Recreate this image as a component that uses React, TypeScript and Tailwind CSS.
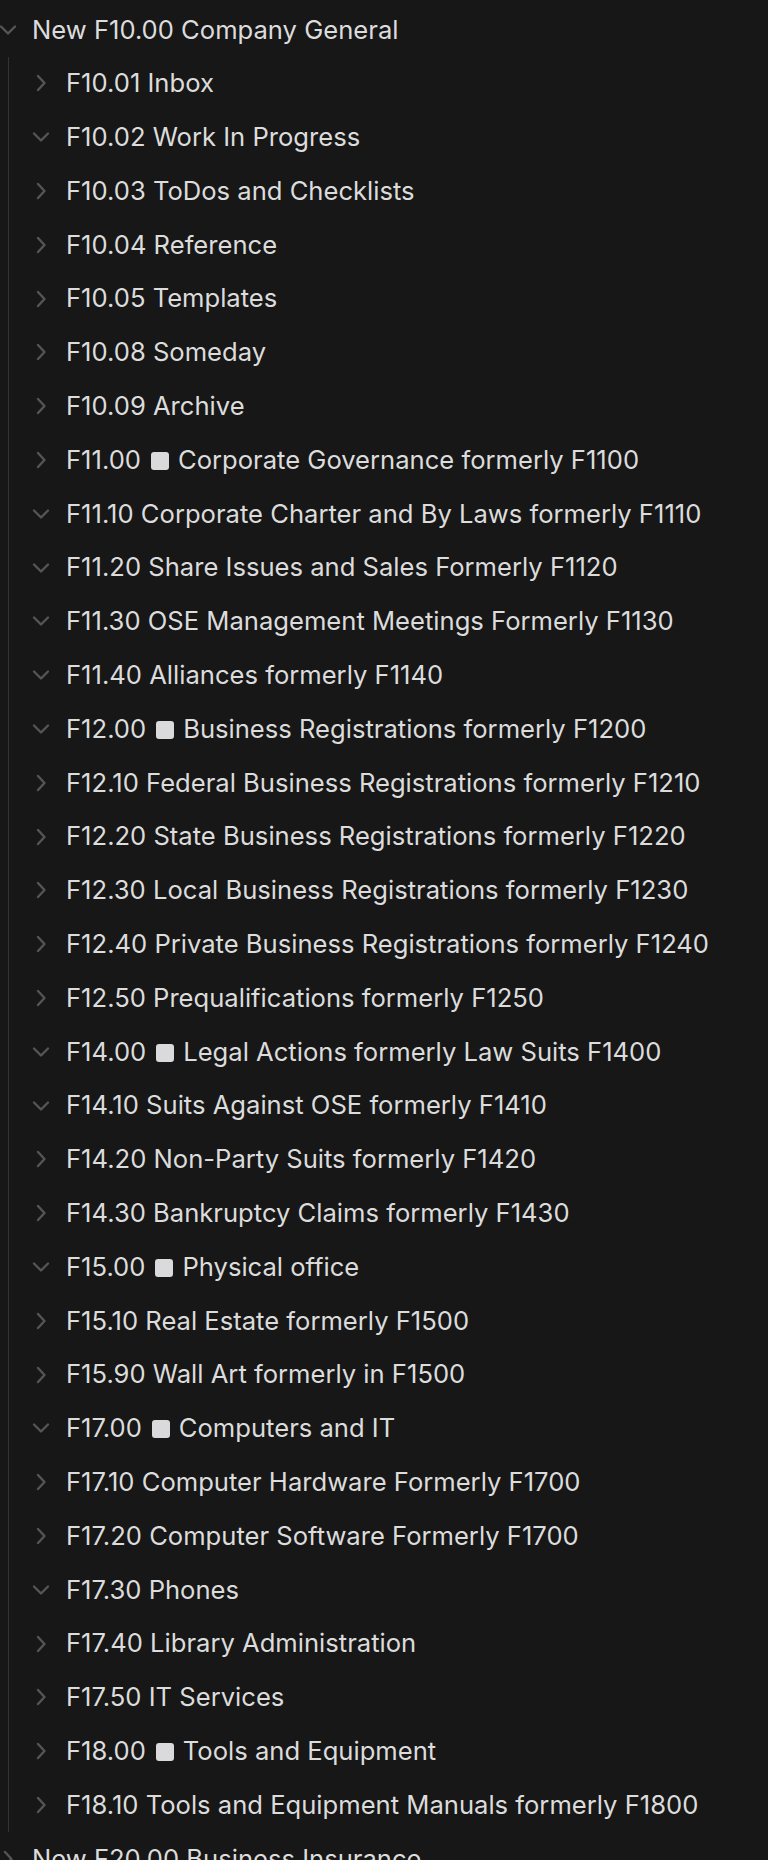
import React from 'react';

type Item = { label: string; open?: boolean; box?: boolean };

const children: Item[] = [
  { label: 'F10.01 Inbox' },
  { label: 'F10.02 Work In Progress', open: true },
  { label: 'F10.03 ToDos and Checklists' },
  { label: 'F10.04 Reference' },
  { label: 'F10.05 Templates' },
  { label: 'F10.08 Someday' },
  { label: 'F10.09 Archive' },
  { label: 'F11.00|Corporate Governance formerly F1100', box: true },
  { label: 'F11.10 Corporate Charter and By Laws formerly F1110', open: true },
  { label: 'F11.20 Share Issues and Sales Formerly F1120', open: true },
  { label: 'F11.30 OSE Management Meetings Formerly F1130', open: true },
  { label: 'F11.40 Alliances formerly F1140', open: true },
  { label: 'F12.00|Business Registrations formerly F1200', box: true, open: true },
  { label: 'F12.10 Federal Business Registrations formerly F1210' },
  { label: 'F12.20 State Business Registrations formerly F1220' },
  { label: 'F12.30 Local Business Registrations formerly F1230' },
  { label: 'F12.40 Private Business Registrations formerly F1240' },
  { label: 'F12.50 Prequalifications formerly F1250' },
  { label: 'F14.00|Legal Actions formerly Law Suits F1400', box: true, open: true },
  { label: 'F14.10 Suits Against OSE formerly F1410', open: true },
  { label: 'F14.20 Non-Party Suits formerly F1420' },
  { label: 'F14.30 Bankruptcy Claims formerly F1430' },
  { label: 'F15.00|Physical office', box: true, open: true },
  { label: 'F15.10 Real Estate formerly F1500' },
  { label: 'F15.90 Wall Art formerly in F1500' },
  { label: 'F17.00|Computers and IT', box: true, open: true },
  { label: 'F17.10 Computer Hardware Formerly F1700' },
  { label: 'F17.20 Computer Software Formerly F1700' },
  { label: 'F17.30 Phones', open: true },
  { label: 'F17.40 Library Administration' },
  { label: 'F17.50 IT Services' },
  { label: 'F18.00|Tools and Equipment', box: true },
  { label: 'F18.10 Tools and Equipment Manuals formerly F1800' },
];

function Chevron({ open }: { open?: boolean }) {
  return (
    <div className="w-[34px] shrink-0 flex items-center justify-center">
      {open ? (
        <svg width="18" height="12" viewBox="0 0 18 12" fill="none">
          <path d="M2 2.5 L9 9.5 L16 2.5" stroke="#555555" strokeWidth="2.4" strokeLinecap="round" strokeLinejoin="round" />
        </svg>
      ) : (
        <svg width="12" height="18" viewBox="0 0 12 18" fill="none">
          <path d="M3 2 L9.5 9 L3 16" stroke="#555555" strokeWidth="2.4" strokeLinecap="round" strokeLinejoin="round" />
        </svg>
      )}
    </div>
  );
}

function Label({ item }: { item: Item }) {
  if (item.box) {
    const [code, rest] = item.label.split('|');
    return (
      <span className="whitespace-nowrap">
        {code}
        <span className="inline-block w-[18px] h-[18px] rounded-[3px] bg-[#dadadd] ml-[10px] mr-[9px] align-[-1px]" />
        {rest}
      </span>
    );
  }
  return <span className="whitespace-nowrap">{item.label}</span>;
}

export default function App() {
  return (
    <div
      className="w-[768px] h-[1860px] overflow-hidden bg-[#171717] text-[#dcdcdc] text-[25.6px]"
      style={{ fontFamily: 'Inter, "Noto Sans", sans-serif' }}
    >
      <div className="pt-[2.8px]">
        {/* top folder */}
        <div className="flex items-center h-[53.8px] -ml-[9px] gap-[7px]">
          <Chevron open />
          <Label item={{ label: 'New F10.00 Company General' }} />
        </div>

        {/* children with guide line */}
        <div className="ml-[8px] border-l-[1.5px] border-[#333333] pl-[15px]">
          {children.map((c, i) => (
            <div key={i} className="flex items-center h-[53.8px] gap-[8px]">
              <Chevron open={c.open} />
              <Label item={c} />
            </div>
          ))}
        </div>

        {/* next top folder, cut off at the bottom edge */}
        <div className="flex items-center h-[53.8px] -ml-[9px] gap-[7px]">
          <Chevron />
          <Label item={{ label: 'New F20.00 Business Insurance' }} />
        </div>
      </div>
    </div>
  );
}
